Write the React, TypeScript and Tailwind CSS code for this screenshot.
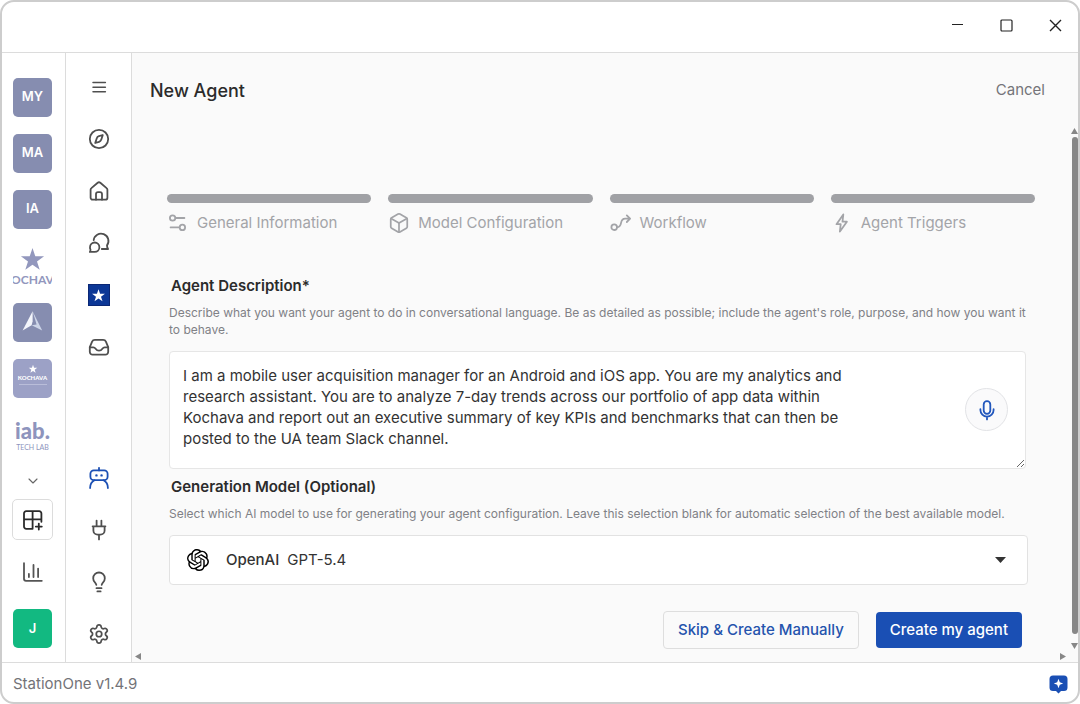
import { useState, type ReactNode } from "react";
import { Box, ChevronDown, Settings } from "lucide-react";
import { SiOpenai } from "react-icons/si";

const STAR = "M12 1.8l2.5 7.4h7.8l-6.3 4.6 2.4 7.4-6.4-4.5-6.4 4.5L8 13.8 1.7 9.2h7.8z";

function Icon({ children, size = 24 }: { children: ReactNode; size?: number }) {
  return (
    <svg
      width={size}
      height={size}
      viewBox={size === 22 ? "1 1 22 22" : "0 0 24 24"}
      fill="none"
      stroke="currentColor"
      strokeWidth="1.8"
      strokeLinecap="round"
      strokeLinejoin="round"
      aria-hidden="true"
      className="shrink-0"
    >
      {children}
    </svg>
  );
}

const topNav = [
  { label: "Menu", icon: <path strokeWidth="1.5" d="M6 7.5h12.4M6 12.2h12.4M6 16.8h12.4" /> },
  {
    label: "Explore",
    icon: (
      <>
        <circle cx="12" cy="12" r="9.2" />
        <path d="M15.8 8l-3.9 1.2a3.4 3.4 0 0 0-2.2 2.2L8.2 16l3.9-1.2a3.4 3.4 0 0 0 2.2-2.2z" />
      </>
    ),
  },
  {
    label: "Home",
    icon: (
      <>
        <path d="M3.6 10.8c0-.7.3-1.3.8-1.7l6.3-5.3a2 2 0 0 1 2.6 0l6.3 5.3c.5.4.8 1 .8 1.7v7.9a2 2 0 0 1-2 2H5.6a2 2 0 0 1-2-2z" />
        <path d="M9 20.7v-5.6a2 2 0 0 1 2-2h2a2 2 0 0 1 2 2v5.6" />
      </>
    ),
  },
  {
    label: "Chats",
    icon: (
      <>
        <path d="M6.7 9.2A7.4 7.4 0 1 1 20 14.400c0 1.200.3 2.400 1.100 3.600H14.800" />
        <path d="M3 16.200a4.700 4.700 0 1 1 4.700 4.700H2.800c.5-.7.7-1.400.7-2.200a4.700 4.700 0 0 1-.5-2.500z" />
      </>
    ),
  },
  { label: "Kochava", icon: null },
  {
    label: "Inbox",
    icon: (
      <>
        <path d="M2.8 12.200l2.300-5.500a3 3 0 0 1 2.800-1.900h8.200a3 3 0 0 1 2.800 1.900l2.300 5.500v4.600a2.800 2.800 0 0 1-2.800 2.800H5.600a2.800 2.800 0 0 1-2.800-2.800z" />
        <path d="M2.8 12.400h3.500c1.200 0 1.800.6 2.300 1.300.7 1 1.600 1.900 3.400 1.900s2.700-.9 3.400-1.900c.5-.7 1.100-1.300 2.300-1.300h3.500" />
      </>
    ),
  },
];

const bottomNav = [
  {
    label: "Agents",
    icon: (
      <>
        <path d="M12 1.800v2.600" />
        <rect x="3.400" y="4.400" width="17.200" height="9.800" rx="3.400" />
        <path d="M9.400 9.400h.1M14.500 9.400h.1" strokeWidth="2.400" />
        <path d="M3.100 22c0-3.600 1.300-6.300 4.400-7.800M20.900 22c0-3.600-1.300-6.300-4.400-7.800" />
      </>
    ),
  },
  {
    label: "Connections",
    icon: (
      <path d="M9.600 2.600v5.700M14.400 2.600v5.700M5.600 8.300h12.800M6.400 8.300v4.200a4.200 4.200 0 0 0 4.200 4.200h2.800a4.200 4.200 0 0 0 4.200-4.200V8.300M12 16.700v4.700" />
    ),
  },
  {
    label: "Ideas",
    icon: (
      <path d="M9.300 14.900c-.2-1-.6-1.700-1.400-2.500a5.800 5.800 0 1 1 8.200 0c-.8.8-1.200 1.500-1.400 2.500M9.500 18.200h5M10.400 21.400h3.200" />
    ),
  },
  { label: "Settings", icon: null },
];

const steps = [
  {
    label: "General Information",
    icon: (
      <>
        <circle cx="6.600" cy="7" r="2.700" />
        <path d="M9.800 7h8.600M4.600 16.400h8.600" />
        <circle cx="16.400" cy="16.400" r="2.700" />
      </>
    ),
  },
  { label: "Model Configuration", icon: null },
  {
    label: "Workflow",
    icon: (
      <>
        <circle cx="5.200" cy="16.200" r="2.800" />
        <path d="M8.200 16.200c2.800 0 3.300-1.600 3.800-4.100.5-2.800 1.400-4.400 4.200-4.400h4.600M17.800 4.400l3.300 3.300-3.300 3.300" />
      </>
    ),
  },
  { label: "Agent Triggers", icon: <path d="M13.300 3.400L6.500 13.200h4.200l-.8 7.400 7-9.900h-4.400z" /> },
];

function WorkspaceTile({ children, label }: { children: ReactNode; label: string }) {
  return (
    <button
      type="button"
      aria-label={label}
      className="flex size-[39px] shrink-0 items-center justify-center overflow-hidden rounded-[5px] bg-[#868db0] pb-0.5 text-[13px] font-semibold text-white"
    >
      {children}
    </button>
  );
}

function WorkspaceRail() {
  return (
    <nav
      aria-label="Workspaces"
      className="flex w-16 shrink-0 flex-col items-center border-r border-[#dcdcdc] bg-white pt-[25px] pr-0.5 pb-[14px]"
    >
      <div className="flex flex-col items-center gap-[17px]">
        {["MY", "MA", "IA"].map((name) => (
          <WorkspaceTile key={name} label={name}>
            {name}
          </WorkspaceTile>
        ))}
        <button
          type="button"
          aria-label="Kochava"
          className="flex h-10 w-[39px] shrink-0 flex-col items-center overflow-hidden text-[#9297bd]"
        >
          <svg width="27" height="27" viewBox="0 0 24 24" fill="currentColor" className="shrink-0">
            <path d={STAR} />
          </svg>
          <span className="font-[Lato,sans-serif] text-[12px] leading-[13px] font-bold">OCHAV</span>
        </button>
        <WorkspaceTile label="Atlas">
          <svg width="39" height="39" viewBox="0 0 39 39">
            <path d="M19.600 9.200L9.600 28.400l9-5.200 1-4z" fill="#f3f5fb" />
            <path d="M19.600 9.200l9.600 19.200-10.600-5.200 5-.6z" fill="#cdd5e8" />
          </svg>
        </WorkspaceTile>
        <button
          type="button"
          aria-label="Kochava Foundation"
          className="flex size-[39px] shrink-0 flex-col items-center rounded-[5px] bg-[#9ca1c6] pt-[5px] text-white"
        >
          <svg width="10" height="10" viewBox="0 0 24 24" fill="currentColor">
            <path d={STAR} />
          </svg>
          <span className="font-[Lato,sans-serif] text-[6px] leading-[8px] font-black">KOCHAVA</span>
          <span className="mt-0.5 h-px w-7 bg-[#b9bdd9]" />
        </button>
        <button
          type="button"
          aria-label="IAB Tech Lab"
          className="flex h-[39px] w-[39px] shrink-0 flex-col items-center justify-center text-[#8e94bd]"
        >
          <span className="font-[Lato,sans-serif] text-[22px] leading-[24px] font-black">iab.</span>
          <span className="font-[Lato,sans-serif] text-[7px] leading-[8px] whitespace-nowrap">TECH LAB</span>
        </button>
      </div>
      <div className="mt-auto flex flex-col items-center">
        <button type="button" aria-label="Show more" className="mb-[10px] text-[#666]">
          <ChevronDown size={16} strokeWidth={1.7} />
        </button>
        <button
          type="button"
          aria-label="Add app"
          className="mb-5 flex size-[41px] items-center justify-center rounded-[5px] border border-[#dcdcdc] text-[#2b2b2b]"
        >
          <Icon>
            <path d="M11.600 20.800H5.200A2.200 2.200 0 0 1 3 18.600V5.400a2.200 2.200 0 0 1 2.200-2.200h13a2.200 2.200 0 0 1 2.200 2.200v6M11.600 3.200v17.600M3 11.400h17.400v2.400M17.800 15.600v6M14.800 18.600h6" />
          </Icon>
        </button>
        <button type="button" aria-label="Usage" className="mb-[25px] text-[#555]">
          <Icon>
            <path d="M3 3.200v15.600a2 2 0 0 0 2 2h15.800M7.900 14v3M12.500 5v12M17.100 8.600V17" />
          </Icon>
        </button>
        <button
          type="button"
          aria-label="Account J"
          className="flex size-[39px] items-center justify-center rounded-[5px] bg-[#12b981] text-[13px] font-semibold text-white"
        >
          J
        </button>
      </div>
    </nav>
  );
}

function SideNav() {
  return (
    <nav
      aria-label="Main"
      className="flex w-[66px] shrink-0 flex-col items-center justify-between border-r border-[#dcdcdc] bg-white pt-[22px] pb-4 text-[#4f4f4f]"
    >
      <div className="flex flex-col gap-7">
        {topNav.map((item) => (
          <button key={item.label} type="button" aria-label={item.label} className="flex size-6 items-center justify-center">
            {item.icon ? (
              <Icon>{item.icon}</Icon>
            ) : (
              <span className="flex size-[22px] items-center justify-center border border-[#0b2775] bg-[#0c3796] text-white">
                <svg width="15" height="15" viewBox="0 0 24 24" fill="currentColor">
                  <path d={STAR} />
                </svg>
              </span>
            )}
          </button>
        ))}
      </div>
      <div className="flex flex-col gap-7">
        {bottomNav.map((item) => (
          <button
            key={item.label}
            type="button"
            aria-label={item.label}
            className={`flex size-6 items-center justify-center ${item.label === "Agents" ? "text-[#1c50b4]" : ""}`}
          >
            {item.icon ? <Icon>{item.icon}</Icon> : <Settings size={22} strokeWidth={1.9} />}
          </button>
        ))}
      </div>
    </nav>
  );
}

function StepTabs() {
  return (
    <ol className="grid grid-cols-4 gap-[17px] pr-9 pl-[35px]">
      {steps.map((step) => (
        <li key={step.label}>
          <div className="h-[9px] rounded-full bg-[#a0a1a5]" />
          <div className="mt-[9px] flex items-center gap-2 text-[15px] leading-[22px] whitespace-nowrap text-[#a3a4a8]">
            {step.icon ? <Icon size={22}>{step.icon}</Icon> : <Box size={22} strokeWidth={1.9} />}
            {step.label}
          </div>
        </li>
      ))}
    </ol>
  );
}

function AgentForm() {
  const [description, setDescription] = useState(
    "I am a mobile user acquisition manager for an Android and iOS app. You are my analytics and research assistant. You are to analyze 7-day trends across our portfolio of app data within Kochava and report out an executive summary of key KPIs and benchmarks that can then be posted to the UA team Slack channel.",
  );
  const [model, setModel] = useState("GPT-5.4");

  return (
    <form className="mt-[42px] pr-[43px] pl-[37px]" onSubmit={(e) => e.preventDefault()}>
      <label htmlFor="description" className="block pl-0.5 text-[15px] leading-5 font-semibold text-[#2b2b2b]">
        Agent Description*
      </label>
      <p className="mt-2 text-[12px] leading-[17px] text-[#808186]">
        Describe what you want your agent to do in conversational language. Be as detailed as possible; include the
        agent's role, purpose, and how you want it to behave.
      </p>
      <div className="relative mt-[13px] mr-0.5">
        <textarea
          id="description"
          value={description}
          onChange={(e) => setDescription(e.target.value)}
          className="block h-[118px] w-full resize rounded border border-[#e6e6e6] bg-white py-[13px] pr-[160px] pl-[13px] text-[15px] leading-[21px] text-[#333] outline-none"
        />
        <button
          type="button"
          aria-label="Dictate description"
          className="absolute top-[37px] right-[18px] flex size-[43px] items-center justify-center rounded-full border border-[#e2e3e6] bg-[#fafafb] text-[#2257bd]"
        >
          <Icon>
            <rect x="8.700" y="3.200" width="6.600" height="12.600" rx="3.300" />
            <path d="M5.400 11.200v.8a6.600 6.600 0 0 0 13.200 0v-.8M12 18.600v2.800" />
          </Icon>
        </button>
      </div>

      <label htmlFor="model" className="mt-2 block pl-0.5 text-[15px] leading-5 font-semibold text-[#2b2b2b]">
        Generation Model (Optional)
      </label>
      <p className="mt-2 text-[12px] leading-[17px] text-[#808186]">
        Select which AI model to use for generating your agent configuration. Leave this selection blank for automatic
        selection of the best available model.
      </p>
      <div className="mt-[13px] flex h-[50px] items-center rounded border border-[#e2e2e2] bg-white pr-[21px] pl-[17px] text-[15px] text-[#333]">
        <SiOpenai size={22} className="shrink-0 text-black" />
        <span className="ml-[17px] font-medium">OpenAI</span>
        <select
          id="model"
          value={model}
          onChange={(e) => setModel(e.target.value)}
          className="ml-2 h-full flex-1 appearance-none bg-transparent outline-none"
        >
          <option>GPT-5.4</option>
        </select>
        <svg width="11" height="6" viewBox="0 0 11 6" fill="#333" aria-hidden="true">
          <path d="M0 0h11L5.500 6z" />
        </svg>
      </div>

      <div className="mt-[26px] mr-1.5 flex items-center justify-end gap-[17px] text-[15px] font-medium">
        <button type="button" className="h-[38px] rounded border border-[#dedede] px-[14px] text-[#2453ad]">
          Skip &amp; Create Manually
        </button>
        <button type="submit" className="h-9 rounded bg-[#1a4fb4] px-[14px] text-white">
          Create my agent
        </button>
      </div>
    </form>
  );
}

function Arrow({ d }: { d: string }) {
  return (
    <svg width="7" height="7" viewBox="0 0 7 7" fill="#878787" aria-hidden="true">
      <path d={d} />
    </svg>
  );
}

export default function App() {
  return (
    <div className="flex min-h-screen flex-col overflow-hidden rounded-[14px] border-2 border-[#cdcdcd] bg-white font-[Inter,sans-serif]">
      <header className="flex h-[51px] items-center justify-end gap-9 border-b border-[#dcdcdc] pr-4 pb-[3px] text-[#222]">
        <button type="button" aria-label="Minimize">
          <svg width="13" height="13" viewBox="0 0 13 13" fill="none" stroke="currentColor">
            <path d="M1 5.500h11" />
          </svg>
        </button>
        <button type="button" aria-label="Maximize">
          <svg width="13" height="13" viewBox="0 0 13 13" fill="none" stroke="currentColor" strokeWidth="1.200">
            <rect x="1" y="1" width="11" height="11" rx="1" />
          </svg>
        </button>
        <button type="button" aria-label="Close">
          <svg width="13" height="13" viewBox="0 0 13 13" fill="none" stroke="currentColor" strokeWidth="1.400">
            <path d="M1 1l11 11M12 1L1 12" />
          </svg>
        </button>
      </header>

      <div className="flex flex-1">
        <WorkspaceRail />
        <SideNav />
        <main className="flex min-w-0 flex-1 flex-col bg-[#fafafa]">
          <div className="flex h-[74px] items-center justify-between pr-[33px] pl-[18px]">
            <h1 className="text-[18px] font-medium text-[#2b2b2b]">New Agent</h1>
            <button type="button" className="text-[15px] text-[#747479]">
              Cancel
            </button>
          </div>
          <div className="flex flex-1">
            <div className="min-w-0 flex-1 pt-[67px]">
              <StepTabs />
              <AgentForm />
            </div>
            <div className="flex w-[7px] shrink-0 flex-col items-center" aria-hidden="true">
              <Arrow d="M3.500 1L7 7H0z" />
              <div className="my-[3px] w-1.5 flex-1 rounded-full bg-[#878787]" />
              <div className="mt-1.5">
                <Arrow d="M0 0h7L3.500 6z" />
              </div>
            </div>
          </div>
          <div className="flex h-3 items-end justify-between pr-[11px] pb-0.5 pl-0.5" aria-hidden="true">
            <Arrow d="M7 0v7L1 3.500z" />
            <Arrow d="M0 0v7l6-3.500z" />
          </div>
        </main>
      </div>

      <footer className="flex h-10 items-center justify-between border-t border-[#dcdcdc] pt-1 pr-[10px] pl-[11px]">
        <span className="text-[15px] text-[#737378]">StationOne v1.4.9</span>
        <button type="button" aria-label="Assistant">
          <svg width="19" height="19" viewBox="0 0 19 19">
            <path
              d="M4 .5h11A3.500 3.500 0 0 1 18.500 4v8.500A3.500 3.500 0 0 1 15 16h-3l-2.500 2.500L7 16H4A3.500 3.500 0 0 1 .5 12.500V4A3.500 3.500 0 0 1 4 .5z"
              fill="#1a4fb4"
            />
            <path d="M9.500 3.800l1.300 3.400 3.400 1.300-3.400 1.300-1.300 3.400-1.300-3.400-3.400-1.300 3.400-1.300z" fill="white" />
          </svg>
        </button>
      </footer>
    </div>
  );
}
